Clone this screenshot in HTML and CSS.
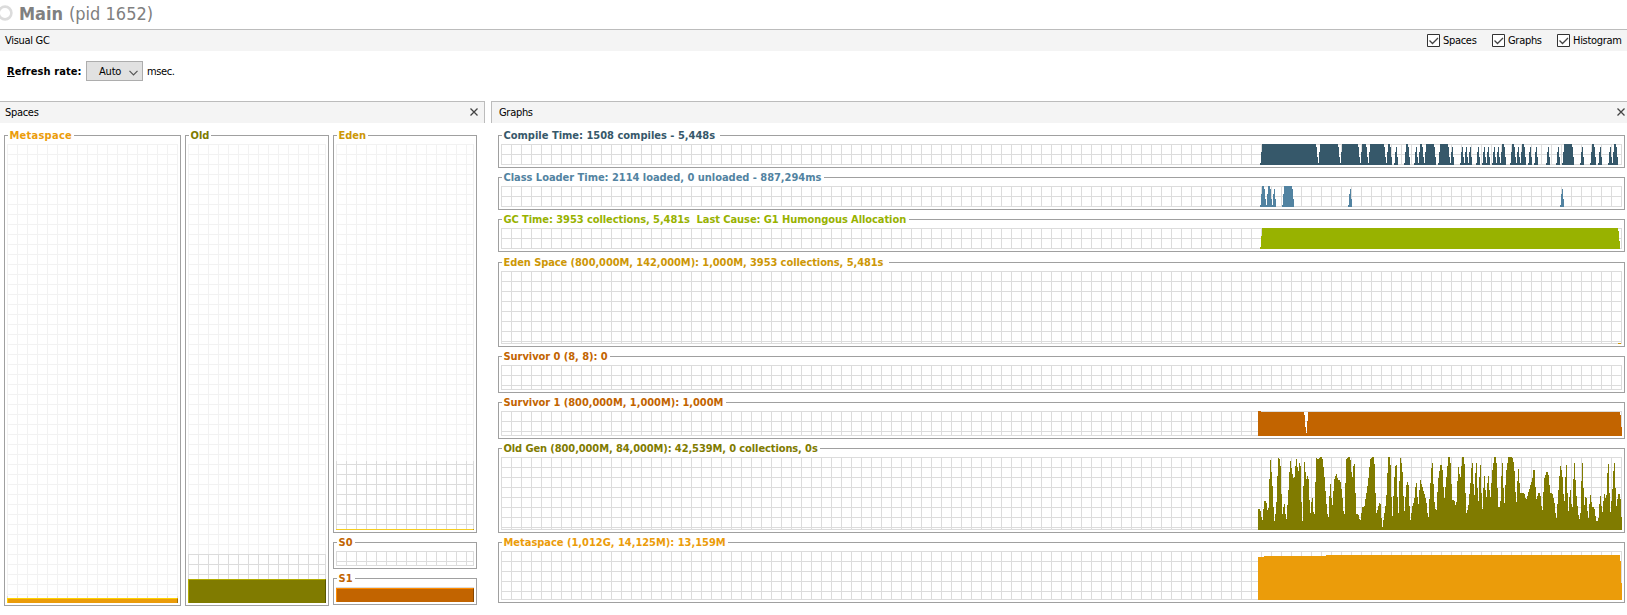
FILE: index.html
```html
<!DOCTYPE html>
<html lang="en">
<head>
<meta charset="utf-8">
<title>Visual GC</title>
<link rel="stylesheet" href="styles.css">
</head>
<body>
<header class="title">
  <svg class="ring" width="13" height="16"><circle cx="5" cy="8" r="6.4"/></svg>
  <b class="app"><span class="t">Main</span></b><span class="pid"><span class="t">(pid 1652)</span></span>
</header>
<div class="bar">
  <span class="label"><span class="t">Visual GC</span></span>
  <div class="checks">
    <label class="check"><svg class="box" width="13" height="13"><path d="M.5.5h12v12H.5z"/><path class="tick" d="M2.500 6.500l3 3 5.500-5.500"/></svg><span class="t">Spaces</span></label>
    <label class="check"><svg class="box" width="13" height="13"><path d="M.5.5h12v12H.5z"/><path class="tick" d="M2.500 6.500l3 3 5.500-5.500"/></svg><span class="t">Graphs</span></label>
    <label class="check"><svg class="box" width="13" height="13"><path d="M.5.5h12v12H.5z"/><path class="tick" d="M2.500 6.500l3 3 5.500-5.500"/></svg><span class="t">Histogram</span></label>
  </div>
</div>
<div class="refresh">
  <b class="rate"><span class="t"><u>R</u>efresh rate:</span></b>
  <div class="select"><span class="t">Auto</span><svg width="9" height="6"><path d="M.5.8l4 4 4-4"/></svg></div>
  <span class="msec"><span class="t">msec.</span></span>
</div>
<main class="panes">
  <section class="pane spaces">
    <div class="head"><span class="t">Spaces</span><svg class="close" width="8" height="8"><path d="M.5.5l7 7M7.500.5l-7 7"/></svg></div>
    <div class="columns">
      <div class="group meta tall"><b class="legend wide"><span class="t">Metaspace</span></b><div class="plot faint"><div class="grid sliver"></div><div class="fill f5"></div></div></div>
      <div class="group old tall"><b class="legend"><span class="t">Old</span></b><div class="plot faint"><div class="grid committed"></div><div class="fill f24"></div></div></div>
      <div class="stack">
        <div class="group eden h398"><b class="legend"><span class="t">Eden</span></b><div class="plot faint"><div class="grid reserve"></div><div class="fill f1"></div></div></div>
        <div class="group surv h27"><b class="legend"><span class="t">S0</span></b><div class="plot grid"></div></div>
        <div class="group surv h27"><b class="legend"><span class="t">S1</span></b><div class="plot grid"><div class="fill f14"></div></div></div>
      </div>
    </div>
  </section>
  <section class="pane graphs">
    <div class="head"><span class="t">Graphs</span><svg class="close" width="8" height="8"><path d="M.5.5l7 7M7.500.5l-7 7"/></svg></div>
    <div class="rows">
      <div class="group compile h33"><b class="legend w218"><span class="t">Compile Time: 1508 compiles - 5,448s</span></b><svg class="plot grid" data-graph="compile"></svg></div>
      <div class="group loader h33"><b class="legend w322"><span class="t">Class Loader Time: 2114 loaded, 0 unloaded - 887,294ms</span></b><svg class="plot grid" data-graph="loader"></svg></div>
      <div class="group gc h33"><b class="legend w407"><span class="t">GC Time: 3953 collections, 5,481s&nbsp; Last Cause: G1 Humongous Allocation</span></b><svg class="plot grid" data-graph="gc"></svg></div>
      <div class="group eden h85 gap"><b class="legend w387"><span class="t">Eden Space (800,000M, 142,000M): 1,000M, 3953 collections, 5,481s</span></b><svg class="plot grid" data-graph="eden"></svg></div>
      <div class="group surv h37"><b class="legend w108"><span class="t">Survivor 0 (8, 8): 0</span></b><svg class="plot grid"></svg></div>
      <div class="group surv h37"><b class="legend w224"><span class="t">Survivor 1 (800,000M, 1,000M): 1,000M</span></b><svg class="plot grid" data-graph="survivor"></svg></div>
      <div class="group old h85"><b class="legend w318"><span class="t">Old Gen (800,000M, 84,000M): 42,539M, 0 collections, 0s</span></b><svg class="plot grid" data-graph="old"></svg></div>
      <div class="group meta h61"><b class="legend w226"><span class="t">Metaspace (1,012G, 14,125M): 13,159M</span></b><svg class="plot grid" data-graph="meta"></svg></div>
    </div>
  </section>
</main>
<script src="graphs.js"></script>
</body>
</html>
```
FILE: styles.css
```css
* { box-sizing: border-box; }
body {
  margin: 0; width: 1627px; height: 615px; overflow: hidden; background: #fff; color: #000;
  font: 11px/13px "DejaVu Sans Condensed", "DejaVu Sans", sans-serif;
}
svg { display: block; flex: none; }
.t { white-space: pre; }
.title { height: 29px; display: flex; align-items: flex-start; color: #808080; font-size: 18px; line-height: 22px; padding-top: 3px; }
.ring { margin-top: 2px; }
.ring circle { fill: none; stroke: #dcdcdc; stroke-width: 2.6; }
.app { margin-left: 6px; width: 50px; }
.bar { height: 22px; border-top: 1px solid #bcbcbc; background: #f4f4f4; display: flex; justify-content: space-between; padding: 4px 6px 0 5px; letter-spacing: -.3px; }
.checks { display: flex; }
.check { display: flex; width: 65px; gap: 3px; }
.check:last-child { width: 64px; }
.box path { fill: #fff; stroke: #333; }
.box .tick { fill: none; stroke: #444; stroke-width: 1.3; }
.refresh { height: 50px; display: flex; padding: 10px 7px 0; }
.rate { width: 79px; padding-top: 4px; letter-spacing: .07px; }
.select { width: 57px; height: 20px; border: 1px solid #adadad; background: #e1e1e1; padding: 3px 4px 0 12px; display: flex; justify-content: space-between; letter-spacing: -.2px; }
.select svg { margin-top: 5px; }
.select path { fill: none; stroke: #555; stroke-width: 1.2; }
.msec { padding: 4px 0 0 4px; letter-spacing: -.4px; }
.panes { display: flex; gap: 6px; }
.head { height: 22px; background: #f4f4f4; border-top: 1px solid #bcbcbc; display: flex; justify-content: space-between; padding: 4px 6px 0 5px; letter-spacing: -.3px; }
.close { margin-top: 2px; }
.close path { stroke: #444; stroke-width: 1.3; }
.spaces { width: 485px; }
.spaces .head { border-right: 1px solid #bcbcbc; }
.graphs { width: 1136px; }
.graphs .head { border-left: 1px solid #bcbcbc; padding: 4px 2px 0 7px; }
.columns { display: flex; gap: 4px; padding: 12px 0 0 4px; }
.group { border: 1px solid #a0a0a0; padding: 0 2px 2px; color: var(--c); display: flex; flex-direction: column; }
.legend { align-self: flex-start; height: 13px; margin: -7px 0 2px 1px; padding: 0 2px 0 1.5px; background: #fff; }
.wide { letter-spacing: .25px; }
.plot { flex: 1; width: 100%; height: 0; display: flex; flex-direction: column; justify-content: flex-end; position: relative; }
.grid, .faint {
  --g: #dcdcdc;
  background:
    linear-gradient(var(--g), var(--g)) right / 1px 100% no-repeat,
    linear-gradient(var(--g), var(--g)) bottom / 100% 1px no-repeat,
    linear-gradient(90deg, var(--g) 1px, transparent 1px) 0 0 / 10px 10px,
    linear-gradient(var(--g) 1px, transparent 1px) 0 0 / 10px 10px;
}
.faint { --g: #f2f2f2; }
.plot > .grid { background-color: #fff; }
.meta { --c: #eb9c0a; --hi: #ffd200; --lo: #a56d00; }
.old { --c: #807b00; --hi: #b2ac00; --lo: #595600; }
.eden { --c: #cd9706; --hi: #f5cc1f; --lo: #8f6a00; }
.surv { --c: #c26400; --hi: #ff8c00; --lo: #874600; }
.compile { --c: #36586a; }
.loader { --c: #5283a1; }
.gc { --c: #98b200; }
.columns .meta { width: 177px; }
.columns .old { width: 144px; }
.stack { width: 144px; display: flex; flex-direction: column; gap: 9px; }
.tall { height: 471px; }
.h398 { height: 398px; }
.h27 { height: 27px; }
.h33 { height: 33px; }
.h37 { height: 37px; }
.h61 { height: 61px; }
.h85 { height: 85px; }
.fill { background: var(--c); border: 1px solid var(--hi); border-right-color: var(--lo); border-bottom: 0; flex: none; }
.f1 { height: 1px; }
.f5 { height: 5px; }
.f14 { height: 14px; }
.f24 { height: 24px; }
.sliver { height: 2px; background-position: right, bottom, 0 0, 0 8px; background-size: 1px 100%, 0 0, 10px 10px, 0 0; }
.committed { height: 25px; background-size: 1px 100%, 0 0, 10px 10px, 10px 10px; }
.reserve { height: 68px; background-position: right, bottom, 0 0, 0 3px; background-size: 1px 100%, 0 0, 10px 10px, 10px 10px; }
.rows { padding: 12px 2px 0 7px; display: flex; flex-direction: column; gap: 9px; }
.rows .gap { margin-top: 1px; }
.plot path { fill: var(--c); }
.w108 { width: 108px; letter-spacing: -.05px; }
.w218 { width: 218px; }
.w224 { width: 224px; letter-spacing: -.05px; }
.w226 { width: 226px; letter-spacing: -.02px; }
.w318 { width: 318px; letter-spacing: -.1px; }
.w322 { width: 322px; letter-spacing: -.03px; }
.w387 { width: 387px; letter-spacing: -.08px; }
.w407 { width: 407px; letter-spacing: -.07px; }
```
FILE: graphs.js
```js
// Busy intervals as [start, end) columns; each one ramps up over two columns and decays over two.
const busy = {
  compile: [[1262,1316],[1320,1338],[1342,1358],[1362,1366],[1370,1384],[1388,1390],[1396,1396],[1406,1408],[1416,1416],[1420,1422],[1426,1434],[1440,1448],[1452,1452],[1462,1462],[1466,1466],[1470,1470],[1478,1478],[1484,1484],[1488,1488],[1494,1494],[1498,1498],[1502,1504],[1512,1514],[1518,1518],[1522,1524],[1530,1530],[1536,1536],[1548,1548],[1558,1558],[1564,1572],[1582,1582],[1592,1594],[1600,1600],[1610,1610],[1614,1616]],
  loader: [[1262,1264],[1268,1270],[1274,1274],[1284,1292],[1350,1350],[1562,1562]],
  gc: [[1262,1618]]
};
const oldGen = [21,21,19,13,10,21,29,29,27,20,22,51,70,58,44,23,9,16,28,54,72,71,64,36,16,23,26,16,11,25,40,58,69,62,56,52,53,64,71,63,59,67,64,28,9,44,68,58,51,54,51,30,17,28,32,18,16,48,72,71,71,72,73,73,71,63,53,39,26,16,13,34,46,32,25,39,51,54,56,52,50,50,48,41,32,19,16,47,71,72,73,73,70,58,53,64,66,37,16,16,15,11,10,17,23,23,24,31,37,44,52,63,71,72,73,73,66,37,17,20,24,27,26,12,3,10,17,24,35,57,73,73,65,33,14,34,53,64,65,33,17,49,72,67,58,34,19,33,45,48,45,24,10,17,24,27,32,43,47,33,26,40,50,46,43,39,36,32,27,17,13,31,
47,62,67,46,28,21,20,38,52,59,65,65,60,43,32,43,53,64,73,73,67,46,30,30,29,25,28,49,63,56,53,64,73,73,66,37,17,20,25,36,47,62,67,46,35,57,67,42,29,53,65,37,21,42,54,40,33,47,54,40,33,47,60,67,73,73,67,42,23,23,29,54,67,42,27,45,60,67,73,73,73,73,72,68,59,38,28,49,61,47,37,37,37,37,36,32,31,34,38,41,45,48,52,60,60,43,31,34,37,37,34,24,20,38,52,55,58,58,55,45,37,37,36,32,27,17,12,26,40,54,64,60,53,36,29,53,65,37,19,33,40,26,23,51,67,50,34,24,15,11,17,49,67,42,25,33,32,19,12,26,35,28,23,23,21,14,9,9,12,26,34,24,18,29,36,32,35,57,66,37,18,29,41,59,67,42,24,31,36,36,31,13];
const ORIGIN = 501;
const rect = (x, h, w, H) => `M${x - ORIGIN} ${H}v${-h}h${w}v${h}z`;
const runs = (list, H) => list.map(([x, h, w]) => rect(x, h, w, H)).join("");

const paths = {
  eden: runs([[1618, 1, 3]], 73),
  survivor: runs([[1258,25,3],[1261,24,43],[1304,21,1],[1305,9,1],[1306,3,1],[1307,15,1],[1308,24,312],[1620,21,1],[1621,9,1]], 25),
  old: runs(oldGen.map((h, i) => [1258 + i, h, 1]), 73),
  meta: runs([[1258,43,6],[1264,44,62],[1326,45,294],[1620,39,1],[1621,17,1]], 49)
};
for (const name in busy) {
  paths[name] = busy[name].map(([s, e]) =>
    runs([[s - 2, 2, 1], [s - 1, 13, 1], [s, 21, e - s], [e, 18, 1], [e + 1, 8, 1]], 21)).join("");
}
document.querySelectorAll("[data-graph]").forEach(svg => {
  const p = document.createElementNS("http://www.w3.org/2000/svg", "path");
  p.setAttribute("d", paths[svg.dataset.graph]);
  svg.append(p);
});
```
